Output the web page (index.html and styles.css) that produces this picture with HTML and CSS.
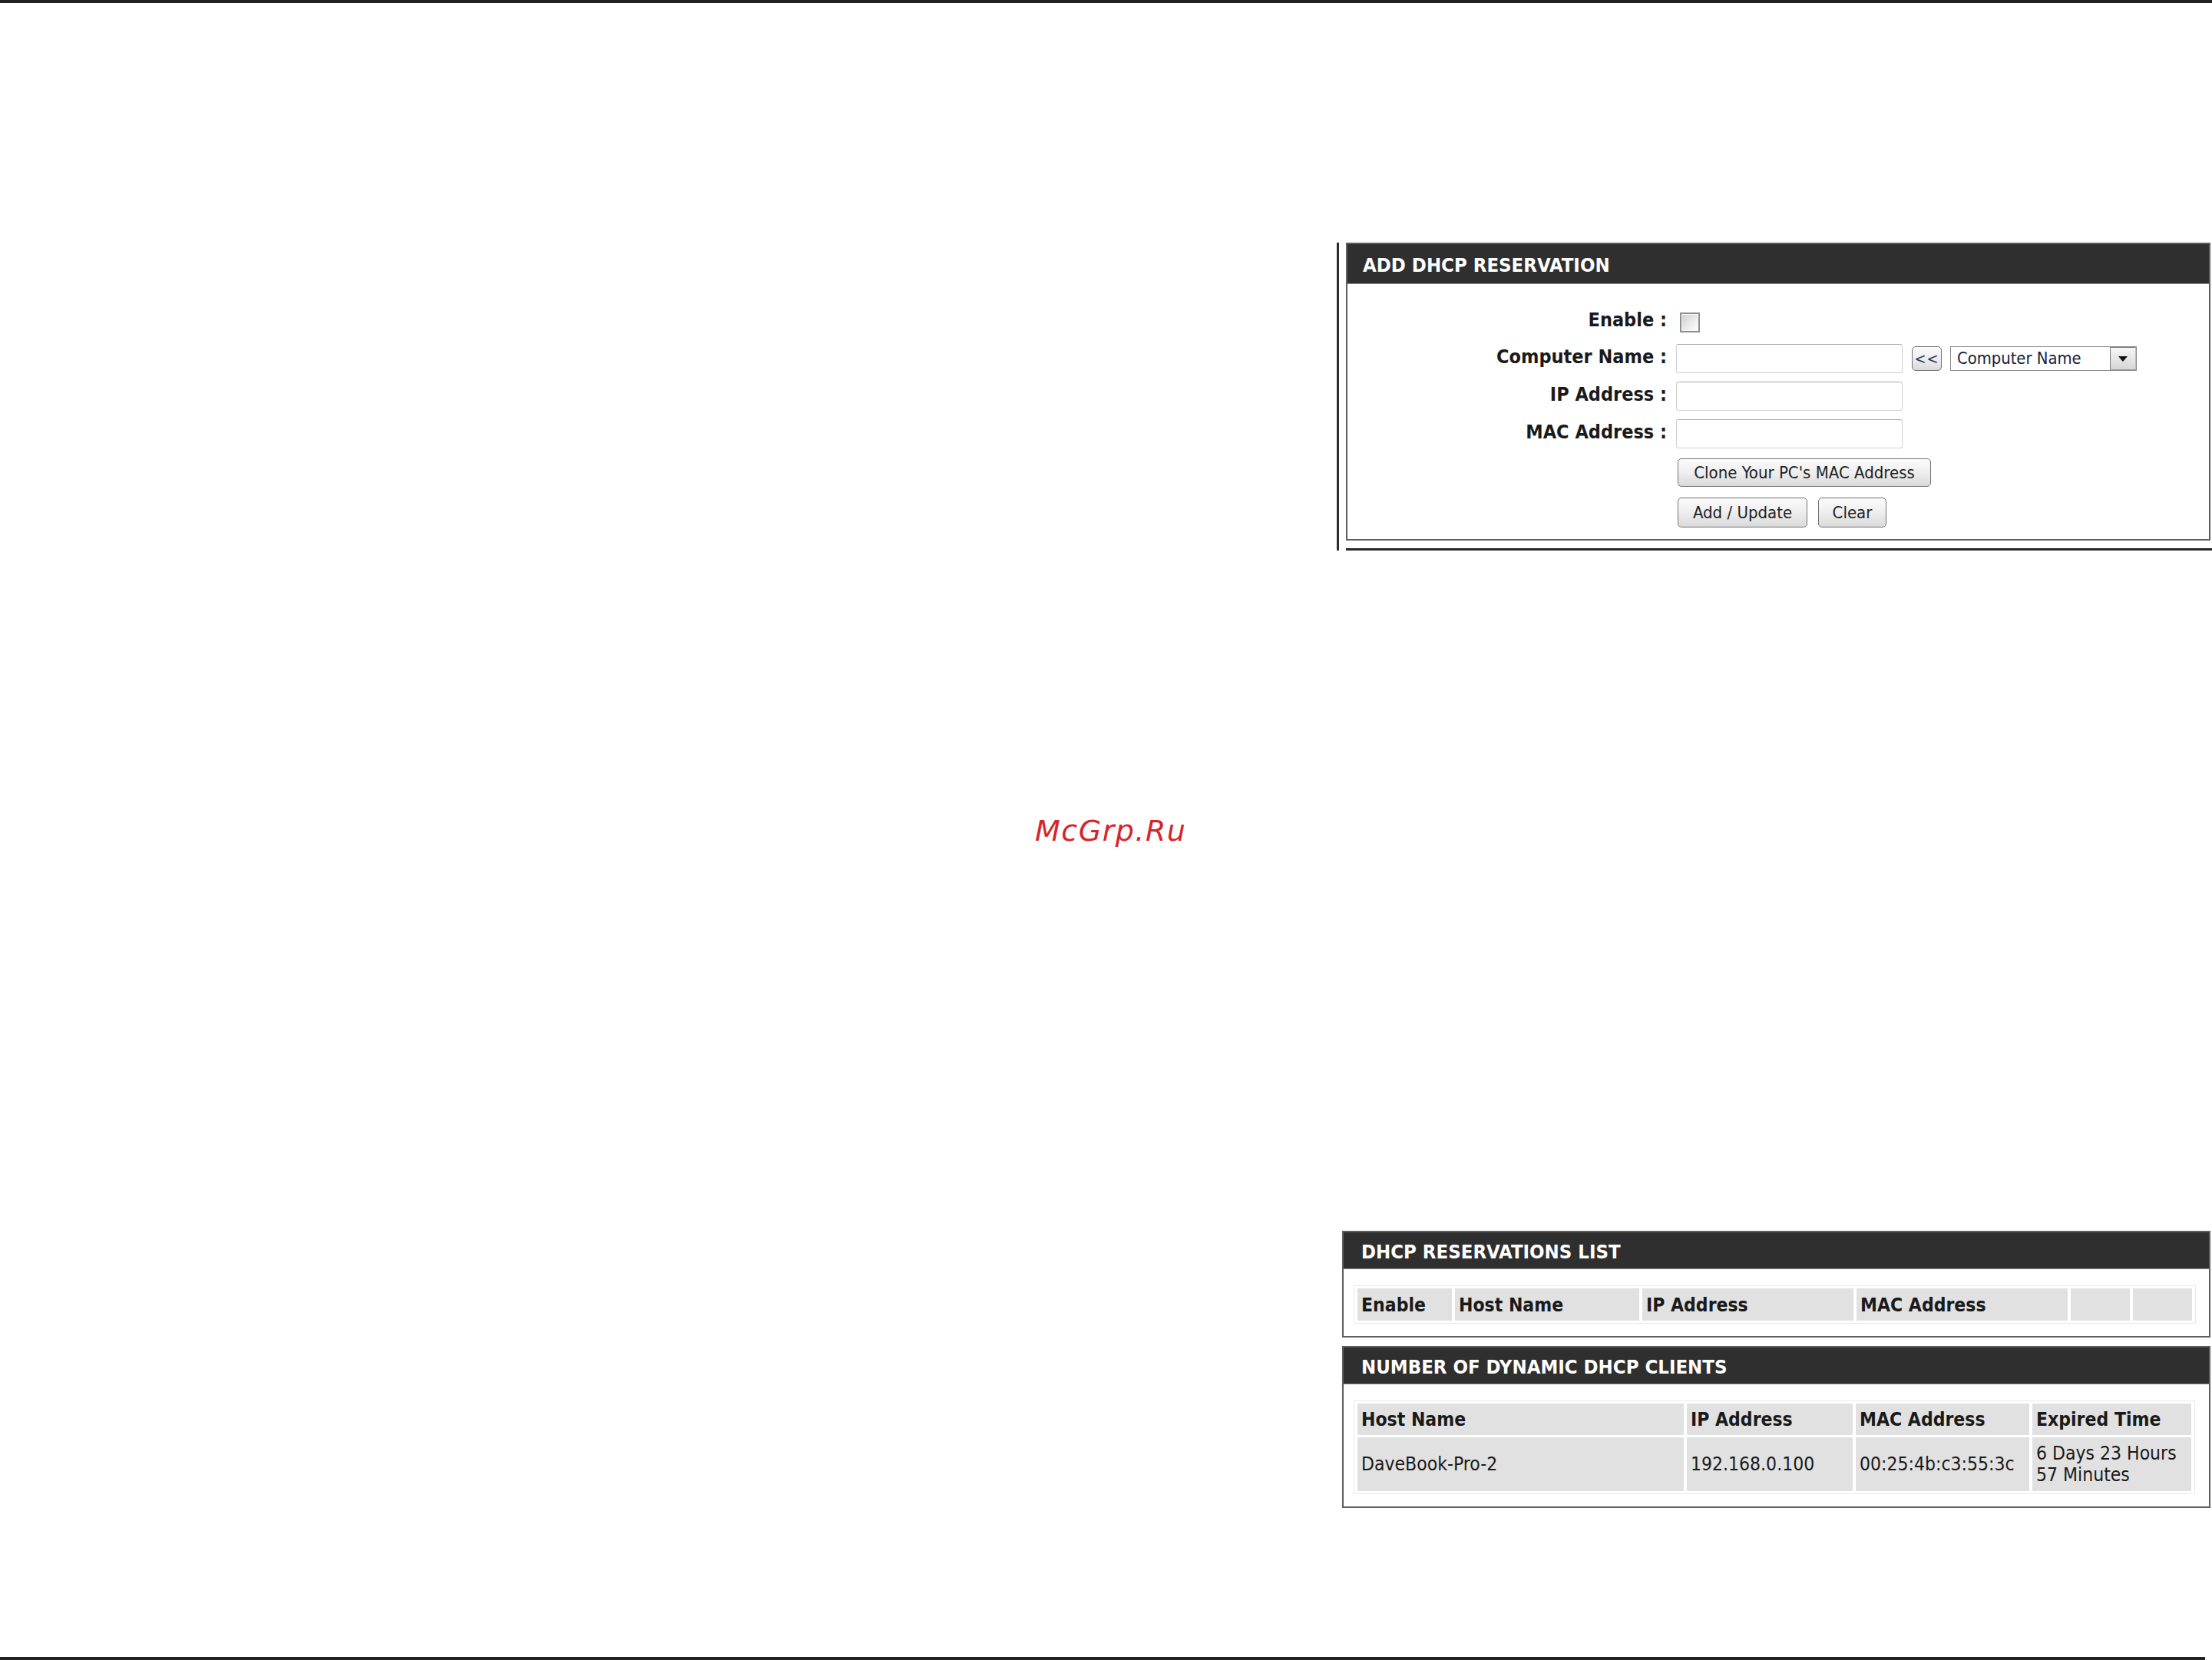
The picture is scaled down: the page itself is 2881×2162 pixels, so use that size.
FILE: index.html
```html
<!DOCTYPE html>
<html lang="en">
<head>
<meta charset="utf-8">
<title>DHCP Reservation</title>
<link rel="stylesheet" href="styles.css">
</head>
<body>
<div class="topbar"></div>
<main class="content">
  <div class="add-wrap">
    <section class="panel panel-add">
      <h2 class="panel-title">ADD DHCP RESERVATION</h2>
      <div class="panel-body form">
        <div class="row row-enable">
          <span class="lbl">Enable :</span>
          <div class="val"><span class="checkbox"></span></div>
        </div>
        <div class="row row-field row-first">
          <span class="lbl">Computer Name :</span>
          <div class="val">
            <span class="input"></span>
            <span class="btn btn-arrow">&lt;&lt;</span>
            <div class="select">
              <span class="select-text">Computer Name</span>
              <span class="select-arrow"><svg width="12" height="7" viewBox="0 0 12 7"><path d="M0 0H12L6 7Z" fill="#111"/></svg></span>
            </div>
          </div>
        </div>
        <div class="row row-field">
          <span class="lbl">IP Address :</span>
          <div class="val"><span class="input"></span></div>
        </div>
        <div class="row row-field">
          <span class="lbl">MAC Address :</span>
          <div class="val"><span class="input"></span></div>
        </div>
        <div class="row row-clone">
          <span class="lbl"></span>
          <div class="val"><span class="btn btn-clone">Clone Your PC's MAC Address</span></div>
        </div>
        <div class="row row-actions">
          <span class="lbl"></span>
          <div class="val"><span class="btn btn-add">Add / Update</span><span class="btn btn-clear">Clear</span></div>
        </div>
      </div>
    </section>
    <div class="rule"></div>
  </div>

  <div class="lists">
    <section class="panel panel-list">
      <h2 class="panel-title">DHCP RESERVATIONS LIST</h2>
      <div class="panel-body list-body">
        <table class="grid grid-res">
          <colgroup>
            <col class="r-enable"><col class="r-host"><col class="r-ip"><col class="r-mac"><col class="r-blank"><col class="r-blank">
          </colgroup>
          <tr class="head"><th>Enable</th><th>Host Name</th><th>IP Address</th><th>MAC Address</th><th></th><th></th></tr>
        </table>
      </div>
    </section>
    <section class="panel panel-list panel-clients">
      <h2 class="panel-title">NUMBER OF DYNAMIC DHCP CLIENTS</h2>
      <div class="panel-body list-body">
        <table class="grid grid-clients">
          <colgroup>
            <col class="d-host"><col class="d-ip"><col class="d-mac"><col class="d-exp">
          </colgroup>
          <tr class="head head2"><th>Host Name</th><th>IP Address</th><th>MAC Address</th><th>Expired Time</th></tr>
          <tr class="data"><td>DaveBook-Pro-2</td><td>192.168.0.100</td><td>00:25:4b:c3:55:3c</td><td>6 Days 23 Hours<br>57 Minutes</td></tr>
        </table>
      </div>
    </section>
  </div>
</main>
<div class="watermark">McGrp.Ru</div>
<div class="bottombar"></div>
</body>
</html>
```

FILE: styles.css
```css
html, body {
  margin: 0;
  padding: 0;
  background: #ffffff;
}

body {
  width: 2881px;
  height: 2162px;
  position: relative;
  overflow: hidden;
  display: flex;
  flex-direction: column;
  font-family: "DejaVu Sans Condensed", "DejaVu Sans", sans-serif;
  font-stretch: semi-condensed;
  color: #1b1b1b;
}

.topbar {
  height: 4px;
  background: #222222;
  flex: none;
}

.content {
  margin-left: 1741px;
  width: 1140px;
  padding-top: 312px;
  flex: none;
}

/* ---------- add reservation ---------- */
.add-wrap {
  border-left: 3px solid #2b2b2b;
  padding-left: 9px;
}

.panel {
  box-sizing: border-box;
  border: 2px solid #5e5e5e;
  background: #ffffff;
}

.panel-add {
  width: 1126px;
}

.panel-title {
  margin: 0;
  height: 52px;
  box-sizing: border-box;
  background: #2f2f2f;
  border-bottom: 1px solid #8c8c8c;
  color: #ffffff;
  font-size: 25.5px;
  font-weight: bold;
  line-height: 55px;
  padding-left: 20px;
  white-space: nowrap;
}

.rule {
  margin-top: 10px;
  height: 3px;
  background: #262626;
}

.form {
  padding: 36px 0 15px 0;
  display: flex;
  flex-direction: column;
}

.row {
  display: flex;
  align-items: center;
}

.lbl {
  width: 416px;
  flex: none;
  box-sizing: border-box;
  text-align: right;
  font-size: 25px;
  font-weight: bold;
  white-space: nowrap;
  color: #1a1a1a;
  padding-bottom: 5px;
}

.val {
  margin-left: 12px;
  display: flex;
  align-items: center;
}

.row-enable { height: 26px; }
.row-field { height: 38px; margin-top: 11px; }
.row-first { margin-top: 16px; }
.row-clone { height: 37px; margin-top: 13px; }
.row-actions { height: 39px; margin-top: 14px; }

.checkbox {
  display: block;
  margin-left: 5px;
  margin-top: 2px;
  width: 26px;
  height: 26px;
  box-sizing: border-box;
  border: 2px solid #8e8e8e;
  background: linear-gradient(135deg, #cfcfcf 0%, #f2f2f2 70%, #ffffff 100%);
  box-shadow: inset 0 0 0 1px #f7f7f7;
}

.input {
  display: block;
  width: 295px;
  height: 38px;
  box-sizing: border-box;
  border: 1px solid #d0d0d0;
  border-top-color: #adadad;
  border-radius: 3px;
  background: #ffffff;
}

.btn {
  display: flex;
  align-items: center;
  justify-content: center;
  box-sizing: border-box;
  border: 1px solid #737373;
  border-radius: 5px;
  background: linear-gradient(#fbfbfb 0%, #eeeeee 50%, #dadada 100%);
  color: #222222;
  font-size: 22px;
  white-space: nowrap;
}

.btn-arrow {
  margin-left: 12px;
  width: 39px;
  height: 32px;
  font-size: 20px;
  color: #2c3c66;
  letter-spacing: 1px;
}

.select {
  margin-left: 11px;
  width: 243px;
  height: 32px;
  box-sizing: border-box;
  border: 1px solid #8a8a8a;
  display: flex;
  background: #ffffff;
}

.select-text {
  flex: 1;
  padding-left: 8px;
  font-size: 21.8px;
  line-height: 30px;
  color: #1a2236;
  white-space: nowrap;
}

.select-arrow {
  width: 34px;
  flex: none;
  box-sizing: border-box;
  border: 1px solid #7a7a7a;
  border-right-color: #bdbdbd;
  border-bottom-color: #9a9a9a;
  background: linear-gradient(#f6f6f6, #d6d6d6);
  display: flex;
  align-items: center;
  justify-content: center;
}

.btn-clone {
  margin-left: 2px;
  width: 330px;
  height: 37px;
}

.btn-add {
  margin-left: 2px;
  width: 169px;
  height: 39px;
}

.btn-clear {
  margin-left: 14px;
  width: 89px;
  height: 39px;
}

/* ---------- lists ---------- */
.lists {
  margin-top: 886px;
  margin-left: 7px;
  width: 1131px;
}

.panel-list .panel-title {
  height: 48px;
  line-height: 51px;
  padding-left: 23px;
}

.panel-clients {
  margin-top: 11px;
}

.list-body {
  padding: 21px 0 16px 13px;
}

.grid {
  table-layout: fixed;
  border-collapse: separate;
  border-spacing: 4px 3px;
  border: 1px solid #e9e9e9;
}

.grid-res { width: 1097px; }
.grid-clients { width: 1096px; }

.grid th,
.grid td {
  box-sizing: border-box;
  background: #e1e1e1;
  padding: 0 0 0 5px;
  text-align: left;
  vertical-align: middle;
  white-space: nowrap;
  overflow: hidden;
  color: #1a1a1a;
}

.grid th {
  height: 42px;
  font-size: 24.5px;
  font-weight: bold;
}

.grid .head2 th {
  height: 41px;
}

.grid td {
  height: 70px;
  font-size: 24.5px;
  line-height: 28px;
}

.r-enable { width: 123px; }
.r-host { width: 240px; }
.r-ip { width: 275px; }
.r-mac { width: 275px; }
.r-blank { width: 77px; }

.d-host { width: 425px; }
.d-ip { width: 216px; }
.d-mac { width: 226px; }
.d-exp { width: 207px; }

/* ---------- overlay & footer ---------- */
.watermark {
  position: absolute;
  left: 1348px;
  top: 1063px;
  font-family: "DejaVu Sans", sans-serif;
  font-stretch: normal;
  font-style: italic;
  font-size: 38px;
  line-height: 38px;
  letter-spacing: 1.5px;
  color: #d3262b;
}

.bottombar {
  margin-top: auto;
  width: 2872px;
  height: 4px;
  background: #222222;
  flex: none;
}
```
